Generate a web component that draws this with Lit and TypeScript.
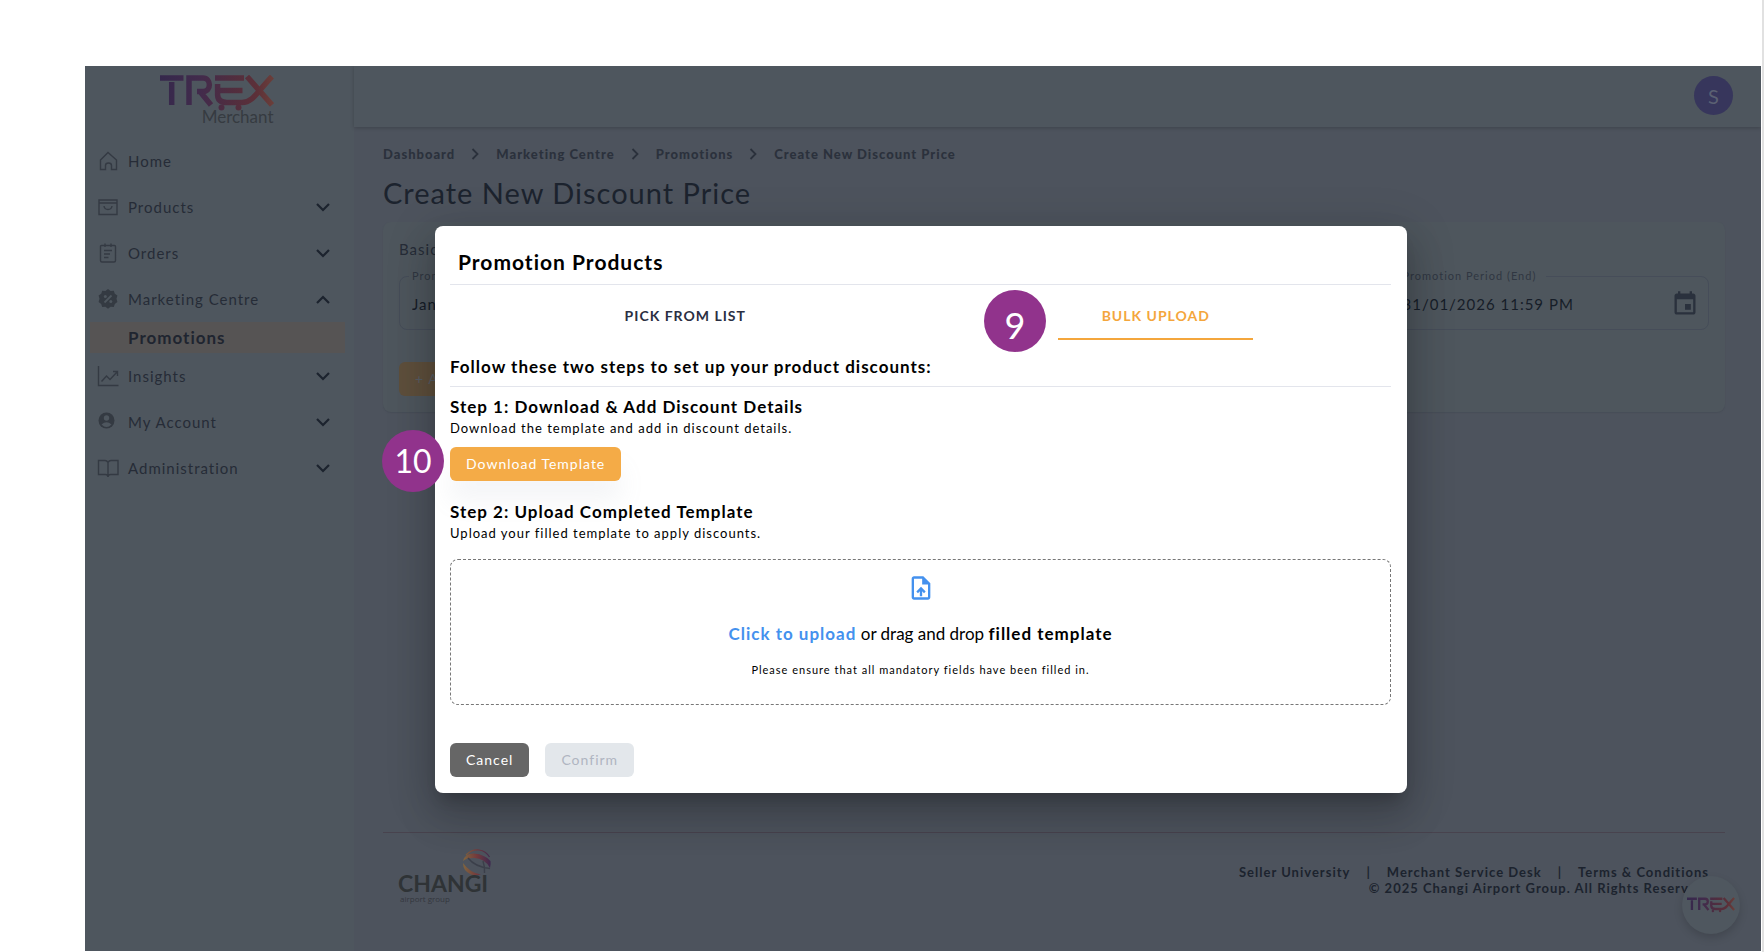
import { LitElement, html, css, svg, nothing } from "lit";
import { customElement, state } from "lit/decorators.js";
import { classMap } from "lit/directives/class-map.js";

const trexMark = (id: string) => html`
  <svg class="trex" viewBox="0 0 114 36" role="img" aria-label="TREX">
    <defs>
      <linearGradient id=${id} gradientUnits="userSpaceOnUse" x1="0" y1="0" x2="114" y2="0">
        <stop offset="0" stop-color="#35284c" />
        <stop offset="0.35" stop-color="#422b4c" />
        <stop offset="0.6" stop-color="#4f2d40" />
        <stop offset="0.85" stop-color="#5c3038" />
        <stop offset="1" stop-color="#6b3f3a" />
      </linearGradient>
    </defs>
    <g fill="none" stroke="url(#${id})" stroke-width="5.5">
      <path d="M0 3.1H23.5M11.7 7V30" />
      <path d="M29 30V3.1H43C51.5 3.1 51.5 16.5 43 16.5H37M40 16.5L51 30" />
      <path d="M55 3.1H84M57.6 9V20Q58 27.5 67 27.5H82C93 27.5 97 17 112 1.500M57.6 15.500H82.500M87 1.500L112 30" />
    </g>
    <g fill="url(#${id})"><circle cx="61.500" cy="32.500" r="3" /><circle cx="78.500" cy="32.500" r="3" /></g>
  </svg>`;

const icons: Record<string, unknown> = {
  home: svg`<path d="M2.500 9L10 1.500L18.500 9V18.500H13.500V14.500Q13.500 12 10.500 12T7.500 14.500V18.500H2.500Z" />`,
  products: svg`<path d="M1 3H19V17.500H1ZM1 6H19M6 9Q6.500 12.500 10 12.500T14 9" />`,
  orders: svg`<path d="M3.500 2.500H16.500Q17.500 2.500 17.500 3.500V17.500Q17.500 19 16 19H4Q2.500 19 2.500 17.500V3.500Q2.500 2.500 3.500 2.500ZM7 0.500V4M13 0.500V4M6 7.500H14M6 11H12M6 14.500H10.500" />`,
  marketing: svg`<path class="solid" d="M10 0L12.600 2L15.800 1.700L16.800 4.700L19.400 6.500L18.500 9.700L19.400 13L16.800 15L15.800 18L12.600 17.700L10 19.800L7.400 17.700L4.200 18L3.200 15L0.600 13L1.500 9.700L0.600 6.500L3.200 4.700L4.200 1.700L7.400 2Z" /><path class="cut" d="M6.500 13.500L13.500 6.500" /><circle class="cutfill" cx="7.300" cy="7.500" r="1.500" /><circle class="cutfill" cx="12.800" cy="12.500" r="1.500" />`,
  insights: svg`<path d="M0.500 0V19.500H20.500M3.500 15.500L8.500 10L12 13.500L19.500 5.500M15 5.500H19.500V10" />`,
  account: svg`<circle class="solid" cx="8.500" cy="8.500" r="8" /><circle class="cutfill" cx="8.500" cy="6" r="2.700" /><path class="cutfill" d="M3.500 12.500Q8.500 8 13.500 12.500Q8.500 17.500 3.500 12.500Z" />`,
  admin: svg`<path d="M10 4.500Q9 2.500 7 2.500H0.500V16.500H7.500Q10 16.500 10 19M10 4.500Q11 2.500 13 2.500H20V16.500H12.500Q10 16.500 10 19M10 4.500V19" />`,
};

interface NavItem {
  label: string;
  icon: string;
  children?: string[];
  open?: boolean;
}

const NAV: NavItem[] = [
  { label: "Home", icon: "home" },
  { label: "Products", icon: "products", children: [] },
  { label: "Orders", icon: "orders", children: [] },
  { label: "Marketing Centre", icon: "marketing", children: ["Promotions"], open: true },
  { label: "Insights", icon: "insights", children: [] },
  { label: "My Account", icon: "account", children: [] },
  { label: "Administration", icon: "admin", children: [] },
];

const CRUMBS = ["Dashboard", "Marketing Centre", "Promotions", "Create New Discount Price"];
const FOOTER_LINKS = ["Seller University", "Merchant Service Desk", "Terms & Conditions"];

@customElement("side-nav")
class SideNav extends LitElement {
  static styles = css`
    :host { display: block; background: #4e565e; }
    .brand { display: flex; justify-content: center; height: 72px; padding-right: 6px; box-sizing: border-box; }
    .lockup { display: flex; flex-direction: column; align-items: flex-end; padding-top: 9px; }
    .lockup .trex { width: 114px; height: 36px; }
    .sub { font-size: 17px; line-height: 12px; letter-spacing: 0; color: #363b41; }
    ul { list-style: none; margin: 0; padding: 0; }
    .row {
      display: flex; align-items: center; gap: 9px; width: 100%; height: 46px; padding: 0 24px 0 13px;
      box-sizing: border-box; border: 0; background: none; color: #262c37; font: inherit; font-size: 15px; letter-spacing: inherit;
      text-align: left; text-decoration: none;
    }
    .icon { width: 21px; height: 20px; overflow: visible; fill: none; stroke: #343a43; stroke-width: 1.400; flex: none; }
    .solid { fill: #343a42; stroke: none; }
    .cut { stroke: #4e565e; stroke-width: 1.800; }
    .cutfill { fill: #4e565e; stroke: none; }
    .label { flex: 1; }
    .chev { width: 14px; height: 9px; fill: none; stroke: #1c232e; stroke-width: 2.200; }
    .child {
      display: flex; align-items: center; height: 31px; margin: 0 9px 0 5px; padding-left: 38px;
      background: #565454; color: #1f2530; font-size: 17px; font-weight: 700; text-decoration: none;
    }
  `;

  render() {
    return html`
      <div class="brand"><div class="lockup">${trexMark("g-side")}<span class="sub">Merchant</span></div></div>
      <nav aria-label="Main"><ul>
        ${NAV.map((item) => html`<li>
          ${item.children
            ? html`<button class="row" type="button" aria-expanded=${item.open ? "true" : "false"}>
                ${this.icon(item)}<span class="label">${item.label}</span>
                <svg class="chev" viewBox="0 0 14 9" aria-hidden="true"><path d=${item.open ? "M1 8L7 2L13 8" : "M1 1L7 7L13 1"} /></svg>
              </button>`
            : html`<a class="row" href="#home">${this.icon(item)}<span class="label">${item.label}</span></a>`}
          ${(item.children ?? []).map((c) => html`<a class="child" href="#promotions" aria-current="page">${c}</a>`)}
        </li>`)}
      </ul></nav>`;
  }

  private icon(item: NavItem) {
    return html`<svg class="icon" viewBox="0 0 21 20" aria-hidden="true">${icons[item.icon]}</svg>`;
  }
}

@customElement("upload-dialog")
class UploadDialog extends LitElement {
  @state() private tab = 1;

  static styles = css`
    :host {
      display: block; box-sizing: border-box; background: #fff; color: #000; border-radius: 8px; padding: 22px 16px 16px 15px;
      box-shadow: 0 11px 15px -7px rgba(0, 0, 0, 0.200), 0 24px 38px 3px rgba(0, 0, 0, 0.140), 0 9px 46px 8px rgba(0, 0, 0, 0.120);
    }
    h2, h3, p { margin: 0; }
    h2 { font-size: 21px; line-height: 28px; font-weight: 700; padding: 0 8px 8px; border-bottom: 1px solid #e3e5ec; }
    .tabs { display: grid; grid-template-columns: 1fr 1fr; justify-items: center; height: 55px; }
    .tab {
      width: 195px; border: 0; border-bottom: 2px solid transparent; background: none; padding: 8px 0 0; font: inherit;
      font-size: 14px; font-weight: 700; letter-spacing: 1px; color: #2b2f42;
    }
    .tab.on { color: #f4a63c; border-color: #f4a63c; }
    .lead { padding: 16px 0 8px; border-bottom: 1px solid #e3e5ec; }
    h3 { font-size: 17px; line-height: 22px; font-weight: 700; }
    .step { padding-top: 9px; font-size: 13px; line-height: 20px; }
    .btn {
      height: 34px; padding: 0 16px; border: 0; border-radius: 6px; font: inherit; font-size: 14px; letter-spacing: inherit; color: #fff;
    }
    .amber { margin: 9px 0 11px; background: #f4ab47; box-shadow: 0 20px 25px rgba(150, 160, 180, 0.100); }
    .drop {
      display: flex; flex-direction: column; align-items: center; box-sizing: border-box; height: 146px; margin-top: 16px; padding-top: 14px;
      border: 1px dashed #777; border-radius: 8px; font-size: 17px; line-height: 24px; letter-spacing: 0; cursor: pointer;
    }
    .drop b { letter-spacing: 1px; }
    .drop .link { color: #4491ee; }
    .file { width: 28px; height: 28px; fill: #4491ee; margin-bottom: 20px; }
    .note { font-size: 11px; line-height: 16px; padding-top: 16px; letter-spacing: 1px; }
    .picker { display: none; }
    .actions { display: flex; gap: 16px; padding-top: 38px; }
    .cancel { background: #666; }
    .confirm { background: #e3e7eb; color: #b0b5c1; }
  `;

  render() {
    const tabs = ["PICK FROM LIST", "BULK UPLOAD"];
    return html`
      <h2 id="title">Promotion Products</h2>
      <div class="tabs" role="tablist">
        ${tabs.map((t, i) => html`<button type="button" role="tab" aria-selected=${this.tab === i ? "true" : "false"}
          class=${classMap({ tab: true, on: this.tab === i })} @click=${() => (this.tab = i)}>${t}</button>`)}
      </div>
      <h3 class="lead">Follow these two steps to set up your product discounts:</h3>
      <section class="step">
        <h3>Step 1: Download &amp; Add Discount Details</h3>
        <p>Download the template and add in discount details.</p>
        <button class="btn amber" type="button">Download Template</button>
      </section>
      <section class="step">
        <h3>Step 2: Upload Completed Template</h3>
        <p>Upload your filled template to apply discounts.</p>
      </section>
      <label class="drop">
        <svg class="file" viewBox="0 0 24 24" aria-hidden="true">
          <path fill-rule="evenodd" d="M14 2H6C4.900 2 4 2.900 4 4V20C4 21.100 4.900 22 6 22H18C19.100 22 20 21.100 20 20V8L14 2ZM18 20H6V4H13V9H18V20ZM8 15.010L9.410 16.420L11 14.840V19H13V14.840L14.590 16.430L16 15.010L12.010 11L8 15.010Z" />
        </svg>
        <span><b class="link">Click to upload</b> or drag and drop <b>filled template</b></span>
        <span class="note">Please ensure that all mandatory fields have been filled in.</span>
        <input class="picker" type="file" />
      </label>
      <div class="actions">
        <button class="btn cancel" type="button">Cancel</button>
        <button class="btn confirm" type="button" disabled>Confirm</button>
      </div>`;
  }
}

@customElement("app-root")
class AppRoot extends LitElement {
  static styles = css`
    :host {
      display: block; min-height: 100vh; box-sizing: border-box; padding: 66px 1px 0 85px; background: #fff; position: relative;
      font: 400 16px/22px Lato, "Liberation Sans", sans-serif; letter-spacing: 1px; overflow: hidden;
      border-right: 2px solid #e1e1e1;
    }
    .shell { display: grid; grid-template-columns: 269px 1fr; min-height: calc(100vh - 67px); background: #4d535d; position: relative; overflow: hidden; }
    .page { display: flex; flex-direction: column; min-width: 0; color: #1c232e; }
    .bar { display: flex; justify-content: flex-end; align-items: center; box-sizing: border-box; height: 61px; padding: 0 28px 2px 0; background: #4e565e; box-shadow: 0 1px 4px rgba(0, 0, 0, 0.200); }
    .avatar { width: 39px; height: 39px; border: 0; border-radius: 50%; background: #37365c; color: #5b6173; font: inherit; font-size: 20px; padding: 0; letter-spacing: 0; }
    main { flex: 1; padding: 17px 36px 0 29px; }
    .crumbs { display: flex; align-items: center; font-size: 13px; line-height: 20px; font-weight: 900; }
    .crumbs a { color: #2b313c; text-decoration: none; }
    .crumbs svg { width: 8px; height: 12px; margin: 0 17px 0 16px; fill: none; stroke: #2b313c; stroke-width: 1.800; }
    h1 { margin: 9px 0; font-size: 29px; line-height: 40px; font-weight: 400; }
    .card { padding: 16px; height: 190px; box-sizing: border-box; border-radius: 8px; background: #4e565d; box-shadow: 0 1px 1px #484e58; }
    .card h2 { margin: 0 0 8px; font-size: 15px; line-height: 22px; font-weight: 400; color: #262c37; }
    .fields { display: grid; grid-template-columns: 2fr 1fr 1fr; gap: 16px; margin-bottom: 32px; }
    fieldset { display: flex; align-items: center; min-width: 0; margin: 0; padding: 0 9px 6px 12px; height: 62px; box-sizing: border-box; border: 1px solid #464d59; border-radius: 8px; }
    legend { padding: 0 10px 0 3px; margin-left: -3px; font-size: 11px; line-height: 16px; color: #303742; }
    input { flex: 1; min-width: 0; padding: 0; border: 0; background: none; font: inherit; font-size: 15px; letter-spacing: inherit; color: #161d28; }
    .cal { width: 28px; height: 28px; fill: #2a313d; flex: none; }
    .add { height: 34px; padding: 0 16px; border: 0; border-radius: 6px; background: #5e4f3c; color: #565d65; font: inherit; font-size: 14px; letter-spacing: inherit; }
    footer { display: flex; justify-content: space-between; height: 119px; box-sizing: border-box; margin: 0 36px 0 29px; padding: 16px 16px 0; border-top: 1px solid #48434e; font-size: 13px; line-height: 16px; font-weight: 700; }
    .changi { width: 92px; height: 58px; overflow: visible; }
    .word { font: 700 23px Lato, sans-serif; letter-spacing: 0; fill: #2f3336; }
    .tiny { font: 400 8px "Open Sans", sans-serif; letter-spacing: 0; fill: #34373d; }
    .legal { padding-top: 15px; text-align: right; }
    .links { display: flex; justify-content: flex-end; gap: 16px; }
    .links a { color: inherit; text-decoration: none; }
    .fab {
      position: absolute; right: 21px; bottom: 17px; width: 58px; height: 58px; border: 0; border-radius: 50%; padding: 0;
      display: flex; align-items: center; justify-content: center; background: #4f575f; box-shadow: 0 4px 8px rgba(0, 0, 0, 0.150);
    }
    .fab .trex { width: 48px; height: 16px; }
    .modal { position: absolute; left: 350px; right: 354px; top: 160px; }
    .note { position: absolute; width: 62px; height: 62px; border-radius: 50%; background: #91338c; color: #fff; display: grid; place-items: center; font-size: 32px; line-height: 40px; letter-spacing: 0; }
    .nine { left: calc(50% + 103px); top: 290px; box-sizing: border-box; padding-top: 8px; font-size: 36px; }
    .ten { left: 382px; top: 430px; }
  `;

  private field(id: string, label: string, value: string, calendar = true) {
    return html`<fieldset>
      <legend><label for=${id}>${label}</label></legend>
      <input id=${id} .value=${value} />
      ${calendar
        ? html`<svg class="cal" viewBox="0 0 24 24" aria-hidden="true"><path fill-rule="evenodd" d="M17 12H12V17H17V12ZM16 1V3H8V1H6V3H5C3.900 3 3 3.900 3 5V19C3 20.100 3.900 21 5 21H19C20.100 21 21 20.100 21 19V5C21 3.900 20.100 3 19 3H18V1H16ZM19 19H5V8H19V19Z" /></svg>`
        : nothing}
    </fieldset>`;
  }

  render() {
    return html`
      <div class="shell">
        <side-nav></side-nav>
        <div class="page">
          <header class="bar"><button class="avatar" type="button" aria-label="Account">S</button></header>
          <main>
            <nav class="crumbs" aria-label="Breadcrumb">
              ${CRUMBS.map((c, i) => html`${i ? html`<svg viewBox="0 0 8 12" aria-hidden="true"><path d="M1.500 1L6.500 6L1.500 11" /></svg>` : nothing}<a href="#crumb">${c}</a>`)}
            </nav>
            <h1>Create New Discount Price</h1>
            <section class="card">
              <h2>Basic Information</h2>
              <div class="fields">
                ${this.field("name", "Promotion Name", "January Discount", false)}
                ${this.field("start", "Promotion Period (Start)", "01/01/2026 12:00 AM")}
                ${this.field("end", "Promotion Period (End)", "31/01/2026 11:59 PM")}
              </div>
              <button class="add" type="button">+ Add Products</button>
            </section>
          </main>
          <footer>
            <svg class="changi" viewBox="0 0 92 58" role="img" aria-label="Changi airport group">
              <defs><linearGradient id="orb" gradientUnits="userSpaceOnUse" x1="64" x2="92" y1="0" y2="0"><stop offset="0" stop-color="#80663f" /><stop offset="0.500" stop-color="#73393c" /><stop offset="1" stop-color="#3c2850" /></linearGradient></defs>
              <path fill="url(#orb)" d="M64 12Q66 4 75 4.500Q86 5.500 91.500 12Q92 15 91 19Q86 9.500 75 9Q67 9 64 12Z" />
              <path fill="url(#orb)" d="M64 14Q64 22 72 25.500Q77 27 82 25.500Q71 24 64 14Z" />
              <path fill="none" stroke="url(#orb)" stroke-width="1.200" d="M67 6Q73 0 80 1Q87 2 90.500 8" />
              <path fill="none" stroke="#3b3f4a" stroke-width="1.400" d="M69 9Q76 18 91 19.500M84 12Q86 18 85.500 24" />
              <text class="word" x="-1" y="43">CHANGI</text>
              <text class="tiny" x="1" y="53">airport group</text>
            </svg>
            <div class="legal">
              <div class="links">${FOOTER_LINKS.map((l, i) => html`${i ? html`<span>|</span>` : nothing}<a href="#footer">${l}</a>`)}</div>
              <div>© 2025 Changi Airport Group. All Rights Reserved.</div>
            </div>
          </footer>
        </div>
        <button class="fab" type="button" aria-label="TREX help">${trexMark("g-fab")}</button>
        <upload-dialog class="modal" role="dialog" aria-modal="true"></upload-dialog>
      </div>
      <div class="note nine">9</div>
      <div class="note ten">10</div>`;
  }
}
